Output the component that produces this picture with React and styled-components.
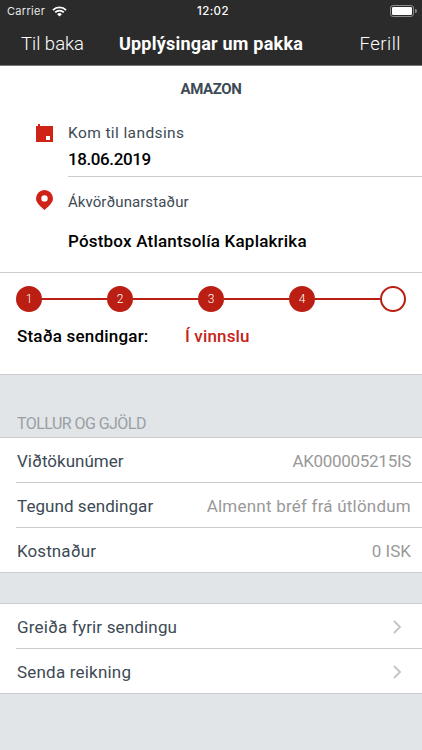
import React from "react";
import styled, { createGlobalStyle } from "styled-components";

const GlobalStyle = createGlobalStyle`
  * {
    box-sizing: border-box;
  }

  body {
    margin: 0;
    background: #e1e5e8;
    font-family: Roboto, "Liberation Sans", sans-serif;
    color: #3d4a54;
  }
`;

const Screen = styled.div`
  width: 422px;
  height: 750px;
  overflow: hidden;
  display: flex;
  flex-direction: column;
  background: #e1e5e8;
`;

const Text = styled.span`
  display: block;
  white-space: nowrap;
  letter-spacing: ${({ $spacing }) => $spacing || 0}px;
`;

const Header = styled.header`
  height: 66px;
  flex: none;
  background: #2b2b2b;
  border-bottom: 1px solid #777;
  color: #fff;
`;

const StatusBar = styled.div`
  height: 22px;
  display: grid;
  grid-template-columns: 1fr auto 1fr;
  align-items: center;
  padding: 0 5px 0 7px;
  font-family: Inter, sans-serif;
  font-size: 11px;
`;

const Carrier = styled.div`
  display: flex;
  align-items: center;
  gap: 7px;
  color: #e8e8e8;
`;

const Clock = styled(Text)`
  padding-left: 2px;
  font-size: 11.5px;
  font-weight: 500;
`;

const BatteryIcon = styled.svg`
  justify-self: end;
`;

const NavBar = styled.nav`
  height: 43px;
  display: grid;
  grid-template-columns: 1fr auto 1fr;
  align-items: center;
  padding: 0 21px;
`;

const NavButton = styled(Text).attrs({ as: "button" })`
  justify-self: ${({ $end }) => ($end ? "end" : "start")};
  padding: 0;
  border: none;
  background: none;
  font-family: inherit;
  font-size: 18.5px;
  font-weight: 300;
  color: #fff;
`;

const Title = styled(Text).attrs({ as: "h1" })`
  margin: 0;
  font-size: 18px;
  font-weight: 700;
`;

const Details = styled.section`
  height: 207px;
  flex: none;
  background: #fff;
  border-bottom: 1px solid #cccdd0;
`;

const Sender = styled(Text).attrs({ as: "h2" })`
  margin: 0;
  padding-top: 14px;
  height: 50px;
  line-height: 18px;
  font-size: 15px;
  font-weight: 700;
  text-align: center;
`;

const Detail = styled.div`
  display: grid;
  grid-template-columns: 32px 1fr;
  height: ${({ $height }) => $height}px;
  padding-left: 36px;
`;

const DetailIcon = styled.svg`
  margin-top: ${({ $top }) => $top}px;
`;

const DetailBody = styled.div`
  display: flex;
  flex-direction: column;
  gap: ${({ $gap }) => $gap}px;
  padding-top: ${({ $top }) => $top}px;
  border-bottom: ${({ $line }) => ($line ? "1px solid #cccccf" : "none")};
`;

const Label = styled(Text)`
  font-size: ${({ $size }) => $size || 15.5}px;
  line-height: 20px;
`;

const Value = styled(Text)`
  font-size: 17px;
  font-weight: 500;
  line-height: 20px;
  color: #000;
`;

const Progress = styled.section`
  height: 102px;
  flex: none;
  padding: 13px 16px 0;
  background: #fff;
  border-bottom: 1px solid #cccdd0;
`;

const Steps = styled.div`
  display: flex;
  align-items: center;
`;

const Step = styled.div`
  width: 26px;
  height: 26px;
  flex: none;
  display: flex;
  align-items: center;
  justify-content: center;
  border: 2px solid #bb1f13;
  border-radius: 50%;
  background: ${({ $done }) => ($done ? "#bb1f13" : "#fff")};
  color: #fff;
  font-size: 12px;
  font-weight: 300;
`;

const StepLine = styled.div`
  flex: 1;
  height: 2px;
  background: #bb1f13;
`;

const Status = styled.div`
  display: grid;
  grid-template-columns: 168px 1fr;
  padding: 14px 0 0 1px;
`;

const StatusText = styled(Value)`
  color: ${({ $active }) => ($active ? "#c4241a" : "#000")};
`;

const GroupHeader = styled.div`
  height: ${({ $height }) => $height}px;
  flex: none;
  display: flex;
  align-items: flex-end;
  padding: 0 17px 4px;
  border-bottom: 1px solid #cccccf;
  font-size: 16px;
  color: #9a9fa3;
`;

const Group = styled.div`
  flex: none;
  background: #fff;
  border-bottom: 1px solid #cccccf;
`;

const Row = styled.div`
  height: 45px;
  margin-left: 16px;
  padding: 2px 11px 0 1px;
  display: flex;
  align-items: center;
  justify-content: space-between;
  border-bottom: 1px solid #cccccf;
  font-size: 17px;

  &:last-child {
    height: 44px;
    border-bottom: none;
  }
`;

const RowValue = styled(Text)`
  color: #999;
`;

const ChevronIcon = styled.svg`
  margin: 0 9px 1px 0;
`;

const Chevron = () => (
  <ChevronIcon width="9" height="14" viewBox="0 0 9 14" fill="none">
    <path d="M1 1l6 6-6 6" stroke="#c4c4c8" strokeWidth="1.8" />
  </ChevronIcon>
);

const Wifi = () => (
  <svg width="15" height="11" viewBox="0 0 15 11" fill="none">
    <path d="M.9 4.1a9.4 9.4 0 0 1 13.2 0M3.2 6.4a6.1 6.1 0 0 1 8.6 0" stroke="#fff" strokeWidth="1.8" />
    <path d="M7.5 10.6L5.1 8.2a3.4 3.4 0 0 1 4.8 0z" fill="#fff" />
  </svg>
);

const Battery = () => (
  <BatteryIcon width="27" height="12" viewBox="0 0 27 12">
    <rect x=".5" y=".5" width="23" height="11" rx="2.6" fill="none" stroke="#8d8d8d" />
    <rect x="2" y="2" width="20" height="8" rx="1.3" fill="#fff" />
    <path d="M25 4a2 2 0 0 1 0 4z" fill="#8d8d8d" />
  </BatteryIcon>
);

const steps = [1, 2, 3, 4];

const charges = [
  { label: "Viðtökunúmer", value: "AK000005215IS", valueSpacing: -0.3 },
  { label: "Tegund sendingar", spacing: 0.06, value: "Almennt bréf frá útlöndum", valueSpacing: 0.22 },
  { label: "Kostnaður", spacing: 0.1, value: "0 ISK" }
];

const actions = [
  { label: "Greiða fyrir sendingu", spacing: 0.16 },
  { label: "Senda reikning", spacing: 0.2 }
];

const App = () => (
  <>
    <GlobalStyle />
    <Screen>
      <Header>
        <StatusBar>
          <Carrier>
            <Text $spacing={0.3}>Carrier</Text>
            <Wifi />
          </Carrier>
          <Clock $spacing={0.4}>12:02</Clock>
          <Battery />
        </StatusBar>
        <NavBar>
          <NavButton>Til baka</NavButton>
          <Title $spacing={0.22}>Upplýsingar um pakka</Title>
          <NavButton $end $spacing={0.5}>Ferill</NavButton>
        </NavBar>
      </Header>

      <Details>
        <Sender $spacing={-0.4}>AMAZON</Sender>
        <Detail $height={61}>
          <DetailIcon $top={8} width="17" height="18" viewBox="0 0 17 18">
            <path d="M0 2h2V0h2v2h13v16H0z" fill="#d02317" />
            <path d="M10 12h4v4h-4z" fill="#fff" />
          </DetailIcon>
          <DetailBody $top={7} $gap={6} $line>
            <Label $spacing={0.4}>Kom til landsins</Label>
            <Value $spacing={-0.4}>18.06.2019</Value>
          </DetailBody>
        </Detail>
        <Detail $height={95}>
          <DetailIcon $top={13} width="17" height="20" viewBox="0 0 17 20">
            <path
              d="M8.5 0A8.4 8.4 0 0 0 0 8.4C0 13.2 5 16.5 8.5 20 12 16.5 17 13.2 17 8.4A8.4 8.4 0 0 0 8.5 0zm0 11.6a3.2 3.2 0 1 1 0-6.4 3.2 3.2 0 0 1 0 6.4z"
              fill="#d02317"
            />
          </DetailIcon>
          <DetailBody $top={15} $gap={19}>
            <Label $size={15} $spacing={0.06}>Ákvörðunarstaður</Label>
            <Value $spacing={0.2}>Póstbox Atlantsolía Kaplakrika</Value>
          </DetailBody>
        </Detail>
      </Details>

      <Progress>
        <Steps>
          {steps.map((step) => (
            <React.Fragment key={step}>
              <Step $done>{step}</Step>
              <StepLine />
            </React.Fragment>
          ))}
          <Step />
        </Steps>
        <Status>
          <StatusText $spacing={0.2}>Staða sendingar:</StatusText>
          <StatusText $active $spacing={0.15}>Í vinnslu</StatusText>
        </Status>
      </Progress>

      <GroupHeader $height={63}>
        <Text $spacing={-0.55}>TOLLUR OG GJÖLD</Text>
      </GroupHeader>
      <Group>
        {charges.map(({ label, spacing, value, valueSpacing }) => (
          <Row key={label}>
            <Text $spacing={spacing}>{label}</Text>
            <RowValue $spacing={valueSpacing}>{value}</RowValue>
          </Row>
        ))}
      </Group>

      <GroupHeader $height={31} />
      <Group>
        {actions.map(({ label, spacing }) => (
          <Row key={label}>
            <Text $spacing={spacing}>{label}</Text>
            <Chevron />
          </Row>
        ))}
      </Group>
    </Screen>
  </>
);

export default App;
